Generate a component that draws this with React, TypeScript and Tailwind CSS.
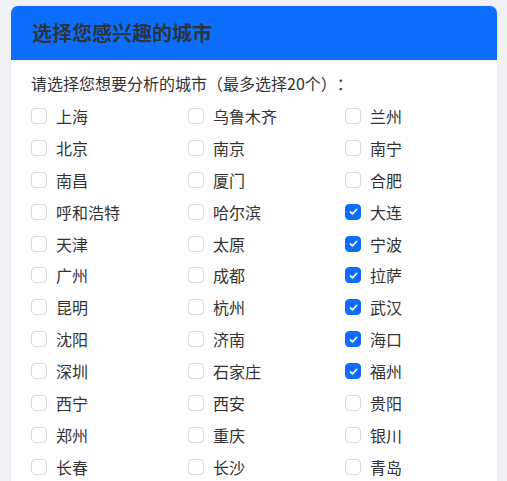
import { useState } from 'react';

const CITIES = [
  '上海', '乌鲁木齐', '兰州',
  '北京', '南京', '南宁',
  '南昌', '厦门', '合肥',
  '呼和浩特', '哈尔滨', '大连',
  '天津', '太原', '宁波',
  '广州', '成都', '拉萨',
  '昆明', '杭州', '武汉',
  '沈阳', '济南', '海口',
  '深圳', '石家庄', '福州',
  '西宁', '西安', '贵阳',
  '郑州', '重庆', '银川',
  '长春', '长沙', '青岛',
];

const INITIAL = ['大连', '宁波', '拉萨', '武汉', '海口', '福州'];

export default function App() {
  const [selected, setSelected] = useState<string[]>(INITIAL);

  const toggle = (city: string) =>
    setSelected(prev => (prev.includes(city) ? prev.filter(c => c !== city) : [...prev, city]));

  return (
    <div
      className="h-[481px] overflow-hidden bg-[#f0f2f5] pl-[11px] pr-[10px] pt-[6px] text-[#333]"
      style={{ fontFamily: '"Noto Sans CJK SC", "Noto Sans", sans-serif' }}
    >
      <div className="overflow-hidden rounded-t-[7px] bg-white shadow-[0_0_4px_rgba(0,0,0,0.06)]">
        <div className="flex h-[54px] items-center bg-[#0d6efd] px-[21px]">
          <h2 className="text-[20px] font-bold leading-none text-[#2c3440]">选择您感兴趣的城市</h2>
        </div>
        <div className="px-[20px] pb-4 pt-[11px]">
          <p className="text-[16px] leading-6 [text-spacing-trim:space-all]">请选择您想要分析的城市（最多选择20个）：</p>
          <div className="mt-[5px] grid grid-cols-[157px_157px_157px]">
            {CITIES.map(city => {
              const checked = selected.includes(city);
              return (
                <label key={city} className="flex h-[31.9px] cursor-pointer items-center gap-[9px]">
                  <span
                    onClick={() => toggle(city)}
                    className={
                      checked
                        ? 'flex h-4 w-4 items-center justify-center rounded-[4px] border border-[#0d6efd] bg-[#0d6efd]'
                        : 'flex h-4 w-4 items-center justify-center rounded-[4px] border border-[#d5d9de] bg-white'
                    }
                  >
                    {checked ? (
                      <svg viewBox="0 0 16 16" className="h-[11px] w-[11px]" fill="none">
                        <path d="M3.5 8.5l3 3 6-6.5" stroke="white" strokeWidth="2.4" strokeLinecap="round" strokeLinejoin="round" />
                      </svg>
                    ) : null}
                  </span>
                  <span className="text-[16px] leading-none">{city}</span>
                </label>
              );
            })}
          </div>
        </div>
      </div>
    </div>
  );
}
